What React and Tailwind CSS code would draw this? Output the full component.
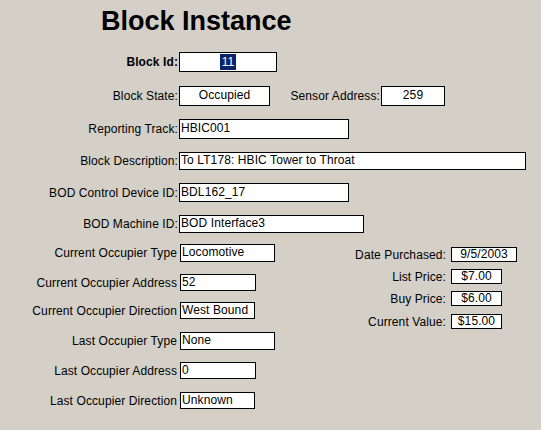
import React from 'react';

// Field box: 1px black border, white fill, 12px text
const Field = ({ value, w, h, center, selected }) => (
    <div
        className={`flex items-center bg-white border border-black leading-none ${center ? 'justify-center' : 'pl-px'}`}
        style={{ width: w, height: h }}
    >
        {selected ? (
            <span className="bg-[#0a246a] text-white px-[2px] py-[2px]">{value}</span>
        ) : (
            <span className="whitespace-nowrap pb-[2px]">{value}</span>
        )}
    </div>
);

const Row = ({ label, value, w, h, mt, labelW = 178, gap = 1, bold, center, selected }) => (
    <div className="flex items-center" style={{ marginTop: mt, height: h }}>
        <div className={`text-right whitespace-nowrap ${bold ? 'font-bold' : ''}`} style={{ width: labelW }}>
            {label}
        </div>
        <div style={{ marginLeft: gap }}>
            <Field value={value} w={w} h={h} center={center} selected={selected} />
        </div>
    </div>
);

const leftRows = [
    { label: 'Current Occupier Type', value: 'Locomotive', w: 95, h: 18, mt: 0 },
    { label: 'Current Occupier Address', value: '52', w: 76, h: 17, mt: 12 },
    { label: 'Current Occupier Direction', value: 'West Bound', w: 75, h: 17, mt: 11 },
    { label: 'Last Occupier Type', value: 'None', w: 95, h: 18, mt: 13 },
    { label: 'Last Occupier Address', value: '0', w: 76, h: 17, mt: 12 },
    { label: 'Last Occupier Direction', value: 'Unknown', w: 75, h: 17, mt: 13 },
];

const rightRows = [
    { label: 'Date Purchased:', value: '9/5/2003', w: 66, h: 15, mt: 3 },
    { label: 'List Price:', value: '$7.00', w: 51, h: 15, mt: 7 },
    { label: 'Buy Price:', value: '$6.00', w: 51, h: 15, mt: 7 },
    { label: 'Current Value:', value: '$15.00', w: 51, h: 15, mt: 8 },
];

export default function App() {
    return (
        <div className="w-[541px] h-[430px] bg-[#d4d0c8] text-black text-[12px] tracking-[0.1px] font-['Liberation_Sans',Arial,sans-serif] overflow-hidden">
            <h1 className="pl-[101px] pt-[8px] text-[27px] leading-[27px] tracking-normal font-bold">Block Instance</h1>

            <Row label="Block Id:" value="11" w={98} h={20} mt={17} bold center selected />

            <div className="flex items-center mt-[14px] h-[20px]">
                <Row label="Block State:" value="Occupied" w={91} h={20} mt={0} center />
                <div className="w-[110px] text-right whitespace-nowrap">Sensor Address:</div>
                <div className="ml-px">
                    <Field value="259" w={64} h={20} center />
                </div>
            </div>

            <Row label="Reporting Track:" value="HBIC001" w={170} h={20} mt={13} />
            <Row label="Block Description:" value="To LT178: HBIC Tower to Throat" w={347} h={18} mt={13} />
            <Row label="BOD Control Device ID:" value="BDL162_17" w={170} h={19} mt={13} />
            <Row label="BOD Machine ID:" value="BOD Interface3" w={185} h={18} mt={13} />

            <div className="flex items-start mt-[11px]">
                <div className="w-[340px]">
                    {leftRows.map((r) => (
                        <Row key={r.label} {...r} labelW={177} gap={3} />
                    ))}
                </div>
                <div>
                    {rightRows.map((r) => (
                        <Row key={r.label} {...r} labelW={106} gap={5} center />
                    ))}
                </div>
            </div>
        </div>
    );
}
